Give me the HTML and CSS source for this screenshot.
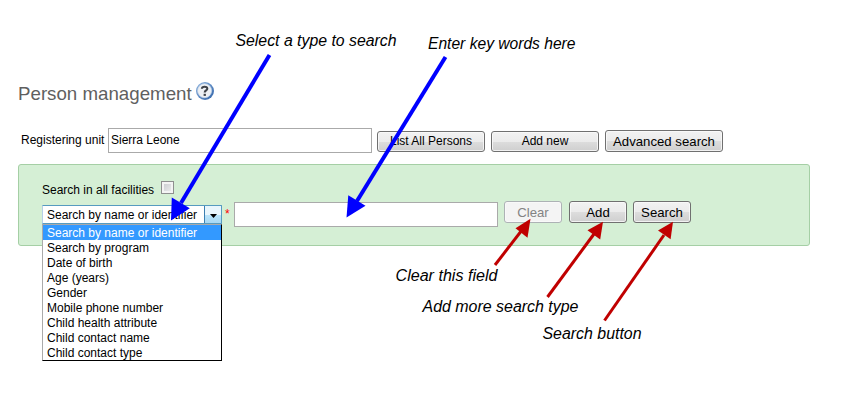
FILE: index.html
```html
<!DOCTYPE html>
<html lang="en">
<head>
<meta charset="utf-8">
<title>Person management</title>
<link rel="stylesheet" href="styles.css">
</head>
<body>
<main class="page">
  <header class="title">
    <h3>Person management</h3>
    <svg class="help" width="20" height="20" viewBox="0 0 20 20">
      <defs><linearGradient id="ring" x1="0" y1="0" x2="1" y2="1"><stop offset="0" stop-color="#8fb5df"/><stop offset="1" stop-color="#2f62a8"/></linearGradient></defs>
      <circle cx="10" cy="10" r="9" fill="url(#ring)"/>
      <circle cx="9.6" cy="9.7" r="7" fill="#edf0f4" stroke="#c9d8eb" stroke-width=".7"/>
      <path d="M6.9 7.7C7 5.2 12.3 5 12.3 7.7C12.3 9.5 9.8 9.4 9.7 11.5" fill="none" stroke="#3d4148" stroke-width="2.1"/>
      <rect x="8.6" y="12.8" width="2.3" height="2.1" fill="#3d4148"/>
    </svg>
  </header>
  <div class="unit-row">
    <label class="unit-label">Registering unit</label>
    <div class="field">Sierra Leone</div>
    <button class="btn small list">List All Persons</button>
    <button class="btn small">Add new</button>
    <button class="btn advanced">Advanced search</button>
  </div>
  <section class="panel">
    <div class="facilities"><label>Search in all facilities</label><span class="check"></span></div>
    <div class="search-row">
      <div class="select">
        <span class="value">Search by name or identifier</span>
        <span class="drop"><svg width="7" height="4" viewBox="0 0 7 4"><path d="M0 0H7L3.5 4Z"/></svg></span>
        <ul class="menu">
          <li class="active">Search by name or identifier</li>
          <li>Search by program</li>
          <li>Date of birth</li>
          <li>Age (years)</li>
          <li>Gender</li>
          <li>Mobile phone number</li>
          <li>Child health attribute</li>
          <li>Child contact name</li>
          <li>Child contact type</li>
        </ul>
      </div>
      <span class="star">*</span>
      <div class="field keyword"></div>
      <button class="btn action clear" disabled>Clear</button>
      <button class="btn action add">Add</button>
      <button class="btn action">Search</button>
    </div>
  </section>
</main>
<svg class="notes" width="864" height="403" viewBox="0 0 864 403">
  <g class="blue-line">
    <path d="M269.5 55L181 203"/><path d="M445.5 57L357 201"/>
  </g>
  <g class="red-line">
    <path d="M495 265L522 230"/><path d="M547.5 297L594 234"/><path d="M604.5 320.5L664 235"/>
  </g>
  <g class="blue-head">
    <path d="M171 220.5L171.8 197.5L189.8 208.2Z"/><path d="M346.5 217.5L348.3 195.2L365.5 205.7Z"/>
  </g>
  <g class="red-head">
    <path d="M530.5 218.8L515.5 228.3L527.5 237.8Z"/><path d="M603 221.8L587.5 230.2L600.2 239.4Z"/><path d="M673 221.8L658 230.4L670.6 239.2Z"/>
  </g>
  <g class="captions">
    <text x="235.5" y="46" textLength="161" lengthAdjust="spacingAndGlyphs">Select a type to search</text>
    <text x="428" y="49" textLength="147.5" lengthAdjust="spacingAndGlyphs">Enter key words here</text>
    <text x="395.5" y="281" textLength="102" lengthAdjust="spacingAndGlyphs">Clear this field</text>
    <text x="422.5" y="312" textLength="156" lengthAdjust="spacingAndGlyphs">Add more search type</text>
    <text x="542.5" y="339" textLength="99" lengthAdjust="spacingAndGlyphs">Search button</text>
  </g>
</svg>
</body>
</html>
```
FILE: styles.css
```css
* { box-sizing: border-box; }
body { margin: 0; background: #fff; font: 12px/15px "Liberation Sans", Arial, sans-serif; color: #000; }
.page { width: 864px; height: 403px; padding: 81px 0 0 18px; }
.title { display: flex; height: 47px; gap: 3px; }
h3 { margin: 2px 0 0; font-size: 18.72px; line-height: 22px; font-weight: normal; color: #5f5f5f; }
.unit-row { display: flex; align-items: flex-start; height: 36px; }
.unit-label { width: 87px; margin-left: 3px; padding-top: 5px; white-space: nowrap; }
.field { width: 264px; height: 25px; flex: none; border: 1px solid #aaa; background: #fff; padding: 4px 2px; }
.btn {
  flex: none; height: 22px; padding: 1px 0 0; border: 1px solid #707070; border-radius: 3px;
  background: linear-gradient(#f2f2f2, #ebebeb 50%, #dddddd 50%, #cfcfcf);
  box-shadow: inset 0 0 0 1px #fafafacc;
  font: 13.2px/19px "Liberation Sans", Arial, sans-serif; color: #000;
}
.small { width: 108px; height: 21px; margin: 3px 6px 0 0; padding: 0; font-size: 12px; line-height: 17px; }
.list { margin-left: 5px; }
.advanced { width: 118px; margin-top: 2px; }
.panel { width: 792px; height: 82px; border: 1px solid #a5cfa5; border-radius: 3px; background: #d5efd5; padding: 16px 0 0 23px; }
.facilities { display: flex; height: 21px; }
.facilities label { width: 119px; padding-top: 2px; }
.check { width: 13px; height: 13px; border: 1px solid #8e8f8f; background: linear-gradient(135deg, #c5c8cc, #f2f2f2); box-shadow: inset 0 0 0 2px #f4f4f4; }
.search-row { display: flex; align-items: flex-start; }
.select { position: relative; display: flex; width: 180px; height: 19px; margin-top: 3px; border: 1px solid #569bc0; border-left-color: #b5cfe7; border-radius: 1px; background: #fff; }
.value { flex: 1; padding: 2px 0 0 4px; white-space: nowrap; }
.drop { display: flex; align-items: center; justify-content: center; width: 17px; border-left: 1px solid #3c7fb1; background: linear-gradient(#e9f6fd 50%, #bce5fb 50%, #a7d9f5); padding-top: 2px; }
.menu { position: absolute; top: 18px; left: -1px; width: 180px; margin: 0; padding: 0; list-style: none; background: #fff; border: 1px solid #000; border-top-color: #aaa; border-left-color: #aaa; }
.menu li { height: 15px; padding: 1px 0 0 4px; white-space: nowrap; }
.menu .active { background: #39f; color: #fff; }
.star { width: 12px; padding: 5px 0 0 3px; color: #f00; }
.action { width: 58px; margin: -1px 0 0 0; }
.clear { margin-left: 6px; margin-right: 7px; border-color: #adb2b5; background: #f4f4f4; color: #838383; }
.add { margin-right: 6px; }
.notes { position: absolute; top: 0; left: 0; }
.blue-line { stroke: #00f; stroke-width: 4; }
.red-line { stroke: #c00000; stroke-width: 3; }
.blue-head { fill: #00f; }
.red-head { fill: #c00000; }
.captions { font-size: 16px; font-style: italic; }
```
